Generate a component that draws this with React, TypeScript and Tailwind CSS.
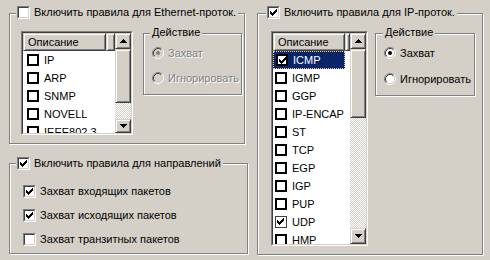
import React from "react"

type Item = { name: string; checked?: boolean; selected?: boolean; thin?: boolean }

const raised =
  "border border-t-[#d4d0c8] border-l-[#d4d0c8] border-r-[#404040] border-b-[#404040] shadow-[inset_1px_1px_0_#fff,inset_-1px_-1px_0_#808080] bg-[#d4d0c8]"

const etched = "relative border border-[#808080] shadow-[inset_1px_1px_0_#fff,1px_1px_0_#fff]"

function Tick() {
  // classic 7x7 check mark, drawn pixel by pixel
  const cols = [2, 3, 4, 3, 2, 1, 0]
  return (
    <svg width="7" height="7" viewBox="0 0 7 7" shapeRendering="crispEdges" className="block">
      {cols.map((y, x) => (
        <rect key={x} x={x} y={y} width="1" height="3" fill="#000" />
      ))}
    </svg>
  )
}

function Checkbox({ checked }: { checked?: boolean }) {
  return (
    <div className="w-[13px] h-[13px] shrink-0 border border-t-[#808080] border-l-[#808080] border-r-white border-b-white">
      <div className="w-full h-full border border-t-[#404040] border-l-[#404040] border-r-[#d4d0c8] border-b-[#d4d0c8] bg-white pl-[1px] pt-[1px]">
        {checked && <Tick />}
      </div>
    </div>
  )
}

function Radio({ checked, disabled }: { checked?: boolean; disabled?: boolean }) {
  return (
    <svg width="12" height="12" viewBox="0 0 12 12" className="shrink-0 block">
      <circle cx="6" cy="6" r="4.5" fill={disabled ? "#d4d0c8" : "#fff"} />
      <path d="M2.11 9.89 A5.5 5.5 0 0 1 9.89 2.11" stroke="#808080" fill="none" />
      <path d="M9.89 2.11 A5.5 5.5 0 0 1 2.11 9.89" stroke="#fff" fill="none" />
      <path d="M2.82 9.18 A4.5 4.5 0 0 1 9.18 2.82" stroke="#404040" fill="none" />
      <path d="M9.18 2.82 A4.5 4.5 0 0 1 2.82 9.18" stroke="#d4d0c8" fill="none" />
      {checked && <circle cx="6" cy="6" r="2" fill={disabled ? "#808080" : "#000"} />}
    </svg>
  )
}

function Arrow({ down }: { down?: boolean }) {
  const rows = [
    [3, 1],
    [2, 3],
    [1, 5],
    [0, 7],
  ]
  return (
    <svg width="7" height="4" viewBox="0 0 7 4" shapeRendering="crispEdges" className="block">
      {rows.map(([x, w], i) => (
        <rect key={i} x={x} y={down ? 3 - i : i} width={w} height="1" fill="#000" />
      ))}
    </svg>
  )
}

function ListBox({ item }: { item: Item }) {
  return (
    <div
      className={`w-[12px] h-[12px] shrink-0 bg-white pl-[1px] pt-[1px] ${
        item.thin ? "border border-[#404040]" : "border-2 border-black"
      }`}
    >
      {item.checked && <Tick />}
    </div>
  )
}

function ListView({
  items,
  size,
  colW,
  thumb,
  down,
  indent,
}: {
  items: Item[]
  size: string
  colW: string
  thumb: string
  down: string
  indent: string
}) {
  return (
    <div className={`${size} shrink-0 border border-t-[#808080] border-l-[#808080] border-r-white border-b-white`}>
      <div className="flex w-full h-full border border-t-[#404040] border-l-[#404040] border-r-[#d4d0c8] border-b-[#d4d0c8]">
        <div className="flex-1 bg-white overflow-hidden">
          <div className="flex h-[18px]">
            <div className={`${colW} ${raised} flex items-center pl-[4px] text-black`}>Описание</div>
            <div className={`flex-1 ${raised}`} />
          </div>
          {items.map((it) => (
            <div
              key={it.name}
              className={`${colW} h-[18px] flex items-center gap-[5px] ${indent} ${
                it.selected
                  ? "bg-[#0a246a] text-white border border-dotted border-[#f0d090]"
                  : "text-black"
              }`}
            >
              <ListBox item={it} />
              <span className="whitespace-nowrap">{it.name}</span>
            </div>
          ))}
        </div>
        <div className="w-[16px] flex flex-col">
          <div className={`h-[16px] ${raised} flex items-center justify-center`}>
            <Arrow />
          </div>
          <div className={`${thumb} ${raised}`} />
          <div className="flex-1 [background-image:repeating-conic-gradient(#d4d0c8_0_25%,#fff_0_50%)] [background-size:2px_2px]" />
          <div className={`${down} ${raised} flex items-center justify-center`}>
            <Arrow down />
          </div>
        </div>
      </div>
    </div>
  )
}

function ActionBox({ disabled, size, pad, titlePos }: { disabled?: boolean; size: string; pad: string; titlePos: string }) {
  const txt = disabled ? "text-[#808080] [text-shadow:1px_1px_0_#fff]" : "text-black"
  return (
    <div className={`${etched} ${size} shrink-0 mt-[2px]`}>
      <div className={`absolute top-[-8px] ${titlePos} bg-[#d4d0c8] px-[2px] leading-[13px] text-black`}>Действие</div>
      <div className={`flex flex-col ${pad}`}>
        <div className="flex items-center gap-[4px] h-[16px]">
          <Radio checked disabled={disabled} />
          <span className={txt}>Захват</span>
        </div>
        <div className="flex items-center gap-[4px] h-[16px]">
          <Radio disabled={disabled} />
          <span className={txt}>Игнорировать</span>
        </div>
      </div>
    </div>
  )
}

function Title({ text, checked, pos }: { text: string; checked?: boolean; pos: string }) {
  return (
    <div className={`absolute ${pos} flex items-center gap-[4px] bg-[#d4d0c8] pl-[1px] pr-[2px] leading-[13px]`}>
      <Checkbox checked={checked} />
      <span className="whitespace-nowrap">{text}</span>
    </div>
  )
}

export default function App() {
  const ether: Item[] = [
    { name: "IP" },
    { name: "ARP" },
    { name: "SNMP" },
    { name: "NOVELL" },
    { name: "IEEE802.3" },
  ]
  const ip: Item[] = [
    { name: "ICMP", checked: true, selected: true },
    { name: "IGMP" },
    { name: "GGP" },
    { name: "IP-ENCAP" },
    { name: "ST" },
    { name: "TCP" },
    { name: "EGP" },
    { name: "IGP" },
    { name: "PUP" },
    { name: "UDP", checked: true, thin: true },
    { name: "HMP" },
  ]

  return (
    <div className="w-[490px] h-[260px] overflow-hidden bg-[#d4d0c8] font-['Liberation_Sans',Arial,sans-serif] text-[11px] text-black flex pl-[9px] pt-[13px]">
      <div className="flex flex-col w-[239px]">
        <div className={`${etched} w-[236px] h-[131px] flex pl-[11px] pt-[17px]`}>
          <Title text="Включить правила для Ethernet-проток." pos="top-[-8px] left-[6px]" />
          <ListView
            items={ether}
            size="w-[112px] h-[104px]"
            colW="w-[83px]"
            thumb="h-[54px]"
            down="h-[14px]"
            indent="pl-[4px]"
          />
          <div className="ml-[10px]">
            <ActionBox disabled size="w-[99px] h-[62px]" pad="pl-[8px] pt-[11px] gap-[9px]" titlePos="left-[6px]" />
          </div>
        </div>

        <div className={`${etched} w-[239px] h-[91px] mt-[19px] flex flex-col gap-[8px] pl-[13px] pt-[19px]`}>
          <Title text="Включить правила для направлений" checked pos="top-[-7px] left-[6px]" />
          <div className="flex items-center gap-[4px] h-[16px]">
            <Checkbox checked />
            <span>Захват входящих пакетов</span>
          </div>
          <div className="flex items-center gap-[4px] h-[16px]">
            <Checkbox checked />
            <span>Захват исходящих пакетов</span>
          </div>
          <div className="flex items-center gap-[4px] h-[16px]">
            <Checkbox />
            <span>Захват транзитных пакетов</span>
          </div>
        </div>
      </div>

      <div className={`${etched} w-[226px] h-[242px] ml-[9px] flex pl-[13px] pt-[17px]`}>
        <Title text="Включить правила для IP-проток." checked pos="top-[-8px] left-[8px]" />
        <ListView
          items={ip}
          size="w-[97px] h-[215px]"
          colW="w-[72px]"
          thumb="h-[69px]"
          down="h-[16px]"
          indent="pl-[2px]"
        />
        <div className="ml-[7px]">
          <ActionBox size="w-[100px] h-[63px]" pad="pl-[8px] pt-[11px] gap-[10px]" titlePos="left-[7px]" />
        </div>
      </div>
    </div>
  )
}
